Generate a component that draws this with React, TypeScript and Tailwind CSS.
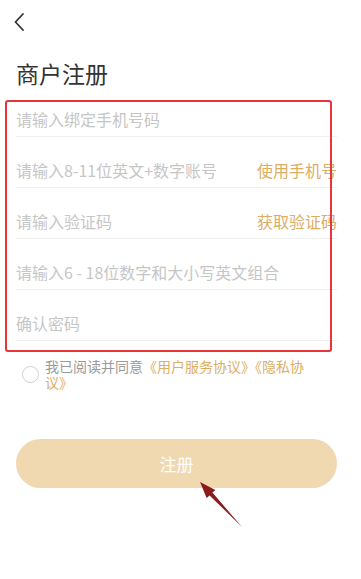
import React from 'react';

const rows = [
  { ph: '请输入绑定手机号码', action: '' },
  { ph: '请输入8-11位英文+数字账号', action: '使用手机号' },
  { ph: '请输入验证码', action: '获取验证码' },
  { ph: '请输入6 - 18位数字和大小写英文组合', action: '' },
  { ph: '确认密码', action: '' },
];

export default function App() {
  return (
    <div
      className="relative w-[361px] h-[579px] bg-white overflow-hidden"
      style={{ fontFamily: '"Noto Sans CJK SC", "Noto Sans", sans-serif' }}
    >
      {/* header */}
      <div className="h-[44px] flex items-center pl-[13px]">
        <svg width="14" height="20" viewBox="0 0 14 20" fill="none">
          <polyline points="10,2 2.5,10 10,18" stroke="#333" strokeWidth="1.8" strokeLinecap="round" strokeLinejoin="round" />
        </svg>
      </div>

      <div className="h-[42px] flex items-end pl-4">
        <h1 className="text-[23px] leading-[25px] text-[#333] font-normal">商户注册</h1>
      </div>

      <div className="pl-4 pr-6">
        {rows.map((r, i) => (
          <div key={i} className="h-[51px] flex items-end pb-[6px] border-b border-[#f0f0f0]">
            <input
              className="flex-1 min-w-0 text-[16px] leading-[22px] outline-none bg-transparent placeholder:text-[#c6c6c6] text-[#333]"
              placeholder={r.ph}
            />
            {r.action && (
              <span className="text-[16px] leading-[22px] text-[#dcae64] shrink-0">{r.action}</span>
            )}
          </div>
        ))}

        <div className="mt-[17px] flex items-center">
          <span className="ml-[6px] w-[17px] h-[17px] rounded-full border border-[#cfcfcf] shrink-0" />
          <p className="ml-[6px] w-[272px] text-[14px] leading-[16px] text-[#9a9a9a]">
            我已阅读并同意<span className="text-[#dcae64]">《用户服务协议》《隐私协议》</span>
          </p>
        </div>

        <button className="mt-[49px] w-full h-[49px] rounded-full bg-[#f0d8b0] text-white text-[17px]">
          注册
        </button>
      </div>

      {/* annotation box */}
      <div className="absolute left-[5px] top-[100px] w-[327px] h-[252px] border-2 border-[#e8353b] rounded-[3px] pointer-events-none" />

      {/* annotation arrow */}
      <svg className="absolute left-0 top-0 pointer-events-none" width="361" height="579">
        <polygon points="200,482 215.4,489.9 212.4,492.6 242,527 209.6,495.4 206.6,498.1" fill="#8b1c1c" />
      </svg>
    </div>
  );
}
